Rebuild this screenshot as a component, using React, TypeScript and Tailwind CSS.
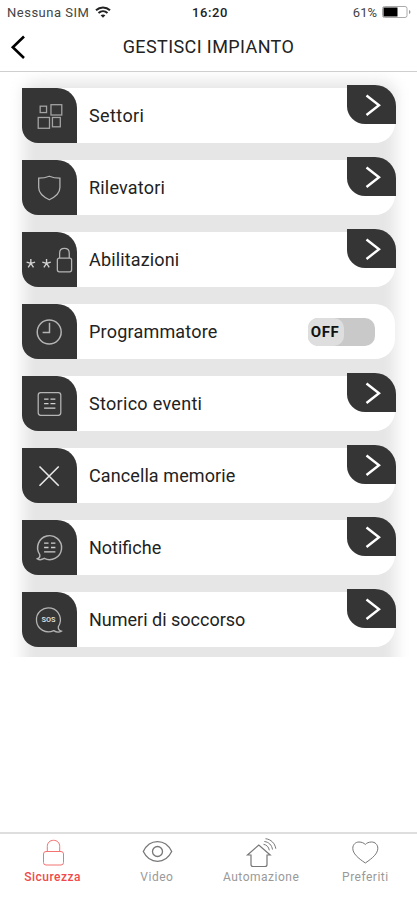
import React, { useState } from 'react';

interface MenuItem {
  id: string;
  label: string;
  spacing: string;
  icon: React.ReactNode;
  toggle?: boolean;
}

interface TabItem {
  id: string;
  label: string;
  icon: React.ReactNode;
}

const tileIcon = {
  width: 56,
  height: 56,
  viewBox: '0 0 56 56',
  fill: 'none',
  stroke: '#b4b4b4',
  strokeWidth: 1,
};

const SectorsIcon = () => (
  <svg {...tileIcon} strokeWidth={1.3} stroke="#a4a4a4">
    <rect x="18.5" y="18" width="6.5" height="6.5" />
    <rect x="29.5" y="16.5" width="11" height="10.5" />
    <rect x="16.5" y="29.5" width="11.5" height="11" />
    <rect x="31" y="29.5" width="8" height="9.5" />
  </svg>
);

const ShieldIcon = () => (
  <svg {...tileIcon} strokeWidth={1.3}>
    <path d="M27.8 16C24 17.600 20.500 18 17 18v9.600c0 5.200 4.300 9.400 10.800 12.400 6.500-3 10.800-7.200 10.800-12.400v-9.600C35 18 31.600 17.600 27.800 16Z" />
  </svg>
);

const PinLockIcon = () => (
  <svg {...tileIcon}>
    <g stroke="#d0d0d0" strokeWidth="1.400">
      <path d="M9 27v4.500M9 31.500l-4.300-1.400M9 31.500l4.300-1.400M9 31.500l-2.700 3.900M9 31.500l2.700 3.900" />
      <path d="M25 27v4.500M25 31.500l-4.300-1.400M25 31.500l4.300-1.400M25 31.500l-2.700 3.900M25 31.500l2.700 3.900" />
    </g>
    <rect x="36" y="26" width="14.500" height="14" rx="2" strokeWidth="1.300" />
    <path d="M38.300 26v-5c0-2.800 2-4.800 4.900-4.800s4.900 2 4.900 4.800v5" strokeWidth="1.300" />
  </svg>
);

const ClockIcon = () => (
  <svg {...tileIcon} strokeWidth={1.5}>
    <circle cx="27.700" cy="28" r="12.200" />
    <path d="M28 18.500v10h-7" />
  </svg>
);

const HistoryIcon = () => (
  <svg {...tileIcon}>
    <rect x="16.500" y="16.500" width="23" height="23" rx="2.500" strokeWidth="1.300" />
    <path d="M22.500 23h4.500M29 23h5M22.500 27.700h4.500M29 27.700h5M22.500 32.300h11.500" stroke="#d0d0d0" strokeWidth="1.300" />
  </svg>
);

const ClearIcon = () => (
  <svg {...tileIcon} stroke="#e8e8e8" strokeWidth={1.6}>
    <path d="M17.800 18.300l19.600 19.600M37.400 18.300L17.800 37.900" />
  </svg>
);

const NotificationsIcon = () => (
  <svg {...tileIcon} strokeWidth={1.500}>
    <path d="M18 34.500A12.200 12.200 0 1 1 22.700 38.600C20.500 39.800 17.500 40.200 15.700 39c2-.8 2.900-2.400 2.300-4.500Z" />
    <path d="M22.500 23h4.500M29.500 23h4.500M22.500 27.500h4.500M29.500 27.500h4.500M22.500 32h11.500" stroke="#d0d0d0" strokeWidth="1.300" />
  </svg>
);

const SosIcon = () => (
  <svg {...tileIcon} strokeWidth={1.300}>
    <path d="M37 34.700A12.200 12.200 0 1 0 32.300 38.800C34.300 40 37.800 40.700 40.100 39.300c-2.200-.7-3.500-2.500-3.100-4.600Z" />
    <text
      x="27"
      y="30.500"
      textAnchor="middle"
      fill="#d8d8d8"
      stroke="none"
      fontSize="7.500"
      fontWeight="700"
      fontFamily="Roboto, sans-serif"
    >
      SOS
    </text>
  </svg>
);

const menuItems: MenuItem[] = [
  { id: 'settori', label: 'Settori', spacing: 'tracking-[0.4px]', icon: <SectorsIcon /> },
  { id: 'rilevatori', label: 'Rilevatori', spacing: 'tracking-[0.2px]', icon: <ShieldIcon /> },
  { id: 'abilitazioni', label: 'Abilitazioni', spacing: 'tracking-[0.15px]', icon: <PinLockIcon /> },
  { id: 'programmatore', label: 'Programmatore', spacing: 'tracking-[0.2px]', icon: <ClockIcon />, toggle: true },
  { id: 'storico', label: 'Storico eventi', spacing: 'tracking-[0.3px]', icon: <HistoryIcon /> },
  { id: 'cancella', label: 'Cancella memorie', spacing: 'tracking-[0.1px]', icon: <ClearIcon /> },
  { id: 'notifiche', label: 'Notifiche', spacing: 'tracking-normal', icon: <NotificationsIcon /> },
  { id: 'soccorso', label: 'Numeri di soccorso', spacing: 'tracking-normal', icon: <SosIcon /> },
];

const tabIcon = {
  width: 32,
  height: 32,
  viewBox: '0 0 32 32',
  fill: 'none',
  stroke: 'currentColor',
  strokeWidth: 1,
};

const tabs: TabItem[] = [
  {
    id: 'sicurezza',
    label: 'Sicurezza',
    icon: (
      <svg {...tabIcon}>
        <rect x="6.500" y="13.500" width="20" height="13.500" rx="2.500" />
        <path d="M10.300 13.500V8.500c0-3.800 2.600-6.200 6.200-6.200s6.200 2.400 6.200 6.200v5" />
      </svg>
    ),
  },
  {
    id: 'video',
    label: 'Video',
    icon: (
      <svg {...tabIcon}>
        <path d="M2.300 13.500C5.500 7 10.500 3.700 16.500 3.700S27.500 7 30.700 13.500C27.500 20 22.500 23.300 16.500 23.300S5.500 20 2.300 13.500Z" strokeWidth="1.300" />
        <circle cx="16.500" cy="13.500" r="5" strokeWidth="1.300" />
      </svg>
    ),
  },
  {
    id: 'automazione',
    label: 'Automazione',
    icon: (
      <svg {...tabIcon}>
        <path d="M6 17H2.500L13.800 7l11.400 10H22v9.500q0 2-2 2H8q-2 0-2-2Z" strokeWidth="1.200" />
        <path d="M18.500 6.300c3.200.5 5.300 2.700 5.800 6M19.300 3.500c4.500.5 7.500 3.500 8.200 8M20.500.700c5.500.6 9.500 4.600 10.300 10" />
      </svg>
    ),
  },
  {
    id: 'preferiti',
    label: 'Preferiti',
    icon: (
      <svg {...tabIcon}>
        <path d="M16.300 25C8.800 20 3.800 15.500 3.800 10.300 3.800 6.500 6.600 4 10 4c2.600 0 5 1 6.300 2.500C17.600 5 20 4 22.600 4c3.400 0 6.200 2.500 6.200 6.300C28.800 15.500 23.800 20 16.300 25Z" />
      </svg>
    ),
  },
];

const StatusBar = () => (
  <div className="grid h-6 grid-cols-3 items-center pl-[7px] pr-[6px] text-[13px] leading-none text-[#444]">
    <div className="flex items-center gap-[6px] tracking-[0.5px]">
      <span>Nessuna SIM</span>
      <svg width="16" height="12" viewBox="0 0 16 12" fill="none" stroke="#222" strokeWidth="2">
        <path d="M1 4.300c4-3.800 10-3.800 14 0M3.500 7c2.600-2.400 6.400-2.400 9 0" />
        <path d="M5.600 9.300c1.400-1.200 3.400-1.200 4.800 0L8 11.700Z" fill="#222" stroke="none" />
      </svg>
    </div>
    <div className="pl-[2px] text-center font-medium tracking-[0.6px] text-[#222]">16:20</div>
    <div className="flex items-center justify-end gap-[5px]">
      <span>61%</span>
      <svg width="29" height="12" viewBox="0 0 29 12">
        <rect x="0.500" y="0.500" width="24.500" height="11" rx="2" fill="none" stroke="#aaa" />
        <rect x="1.500" y="1.500" width="14" height="9" fill="#000" />
        <path d="M27 4v4q1.500-.6 1.500-2T27 4Z" fill="#999" />
      </svg>
    </div>
  </div>
);

const Toggle: React.FC<{ on: boolean; onChange: () => void }> = ({ on, onChange }) => (
  <button
    type="button"
    onClick={onChange}
    className={`flex h-7 w-[67px] rounded-[10px] bg-[#c9c9c9] ${on ? 'justify-end' : 'justify-start'}`}
  >
    <span className="flex h-7 w-9 items-center justify-center rounded-[10px] bg-[#dedede] pr-[2px] pt-px text-[15px] font-bold tracking-[0.5px] text-[#111]">
      {on ? 'ON' : 'OFF'}
    </span>
  </button>
);

const App: React.FC = () => {
  const [activeTab, setActiveTab] = useState('sicurezza');
  const [enabled, setEnabled] = useState(false);

  return (
    <div className="flex h-[900px] w-[417px] flex-col overflow-hidden bg-white font-['Roboto',sans-serif]">
      <StatusBar />

      <header className="grid h-12 grid-cols-[40px_1fr_40px] items-center border-b border-[#cfcfcf] pb-[2px]">
        <button type="button" className="pl-[10px]" aria-label="Indietro">
          <svg width="16" height="24" viewBox="0 0 16 24" fill="none" stroke="#000" strokeWidth="2.600">
            <path d="M14 1.500L2.800 12.300L14 23" />
          </svg>
        </button>
        <h1 className="text-center text-[18px] leading-none tracking-[0.4px] text-[#222]">GESTISCI IMPIANTO</h1>
      </header>

      <main className="relative isolate flex h-[585px] flex-col gap-[17px] overflow-hidden px-[22px] pt-4">
        {/* soft grey glow behind the whole list */}
        <div className="absolute -bottom-5 left-[23px] right-[21px] top-[9px] -z-10 rounded-[14px] bg-[#e6e6e6] blur-[7px]" />
        {menuItems.map((item) => (
          <div key={item.id} className="relative flex h-[55px] shrink-0 items-center rounded-[20px] bg-white">
            <div className="flex h-[55px] w-[55px] items-center justify-center overflow-hidden rounded-bl-[16px] rounded-tr-[20px] bg-[#353535]">
              {item.icon}
            </div>
            <span className={`pl-3 text-[18px] leading-none text-[#222] ${item.spacing}`}>{item.label}</span>
            {item.toggle ? (
              <div className="ml-auto pr-5">
                <Toggle on={enabled} onChange={() => setEnabled(!enabled)} />
              </div>
            ) : (
              <button
                type="button"
                aria-label={item.label}
                className="absolute -right-[1px] -top-[3px] flex h-[39px] w-[49px] items-center justify-center rounded-bl-[18px] rounded-tr-[21px] bg-[#353535]"
              >
                <svg width="18" height="24" viewBox="0 0 18 24" fill="none" stroke="#fff" strokeWidth="2.400">
                  <path d="M3.500 2.500l12.500 9.700L3.500 22" />
                </svg>
              </button>
            )}
          </div>
        ))}
      </main>

      <nav className="mt-auto grid h-[68px] grid-cols-4 border-t-2 border-[#dedede]">
        {tabs.map((tab) => (
          <button
            key={tab.id}
            type="button"
            onClick={() => setActiveTab(tab.id)}
            className={`flex flex-col items-center pl-px pt-1 text-[12px] leading-none tracking-[0.5px] ${
              activeTab === tab.id ? 'font-medium text-[#f04a4a]' : 'text-[#999]'
            }`}
          >
            <span className={activeTab === tab.id ? 'text-[#f47272]' : 'text-[#777]'}>{tab.icon}</span>
            <span className="pt-px">{tab.label}</span>
          </button>
        ))}
      </nav>
    </div>
  );
};

export default App;
